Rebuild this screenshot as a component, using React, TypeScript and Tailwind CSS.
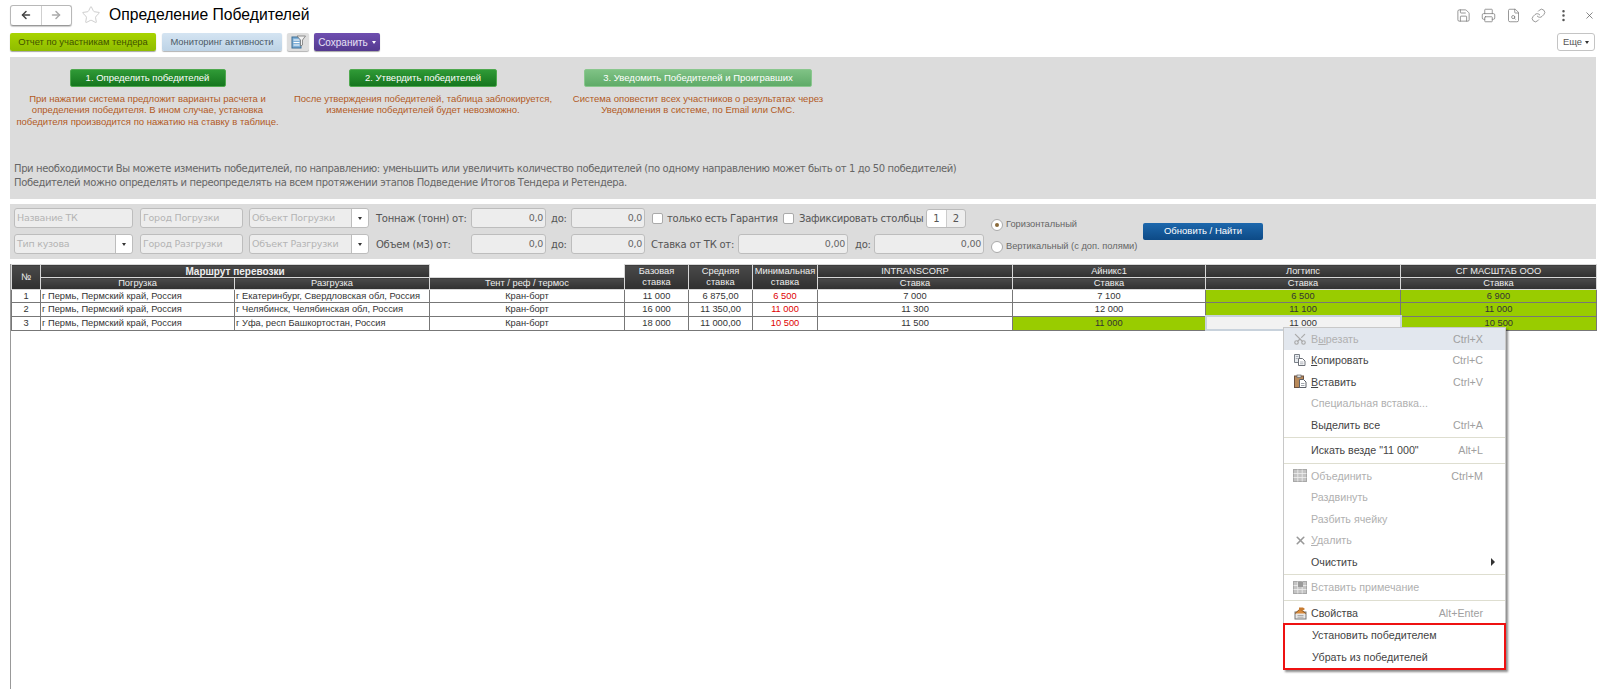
import React from 'react';
import { ArrowLeft, ArrowRight, Star, Save, Printer, FileSearch, Link, MoreVertical, X, Scissors } from 'lucide-react';

const rows = [
  { n: 1, from: 'г Пермь, Пермский край, Россия', to: 'г Екатеринбург, Свердловская обл, Россия', base: '11 000', avg: '6 875,00', min: '6 500', bids: ['7 000', '7 100', '6 500', '6 900'], win: [2, 3] },
  { n: 2, from: 'г Пермь, Пермский край, Россия', to: 'г Челябинск, Челябинская обл, Россия', base: '16 000', avg: '11 350,00', min: '11 000', bids: ['11 300', '12 000', '11 100', '11 000'], win: [2, 3] },
  { n: 3, from: 'г Пермь, Пермский край, Россия', to: 'г Уфа, респ Башкортостан, Россия', base: '18 000', avg: '11 000,00', min: '10 500', bids: ['11 500', '11 000', '11 000', '10 500'], win: [1, 3] },
];

const headBase = 'bg-gradient-to-b from-[#4a4a4a] to-[#303030] text-[#eeeeee] text-center border border-[#d8d8d8] p-0 leading-[11px]';
const head = `${headBase} font-normal`;
const cell = 'border border-[#777] p-0 text-center h-[12.6px] leading-[12px] whitespace-nowrap overflow-hidden';

function GrayInput({ text, w, arrow, right }: { text?: string; w: string; arrow?: boolean; right?: boolean }) {
  return (
    <div className={`${w} h-[20px] shrink-0 flex items-center rounded-[3px] border border-[#bdbdbd] bg-[#ededed] text-[#b4b4b4] text-[9.5px]`}>
      <span className={`flex-1 min-w-0 pl-[2px] pr-[2px] whitespace-nowrap overflow-hidden ${right ? 'text-right text-[#666]' : ''}`}>{text}</span>
      {arrow && (
        <span className="w-[17px] h-full border-l border-[#bdbdbd] bg-white rounded-r-[3px] flex items-center justify-center">
          <span className="w-0 h-0 border-x-[2.5px] border-x-transparent border-t-[3px] border-t-[#333]" />
        </span>
      )}
    </div>
  );
}

function MenuItem({ label, keys, icon, disabled, arrow, hover }: { label: React.ReactNode; keys?: string; icon?: React.ReactNode; disabled?: boolean; arrow?: boolean; hover?: boolean }) {
  return (
    <div className={`h-[21.5px] flex items-center pl-[7px] pr-[22px] text-[10.7px] ${hover ? 'bg-[#e2e7ee]' : ''} ${disabled ? 'text-[#b0b0b0]' : 'text-[#444]'}`}>
      <span className="w-[18px] h-[16px] mr-[2px] flex items-center justify-center shrink-0">{icon}</span>
      <span className="flex-1 whitespace-nowrap">{label}</span>
      {keys && <span className="text-[#a0a0a0] whitespace-nowrap">{keys}</span>}
      {arrow && <span className="w-0 h-0 -mr-[12px] border-y-[4px] border-y-transparent border-l-[4px] border-l-[#333]" />}
    </div>
  );
}

const Sep = () => <div className="h-px my-[1.5px] bg-[#deded0]" />;

const CopyIcon = () => (
  <svg width="14" height="14" viewBox="0 0 14 14" fill="none">
    <path d="M1.500 1.500h5v8h-5z" fill="#e8ecf0" stroke="#7a8088" />
    <path d="M5.500 5.500h4l2.500 2.500v4.500h-6.500z" fill="#fff" stroke="#6c7078" />
    <path d="M7 9h3.500M7 10.800h3.500M2.800 3.500h2.500M2.800 5.500h2" stroke="#9aa0a8" strokeWidth=".8" />
  </svg>
);

const PasteIcon = () => (
  <svg width="15" height="15" viewBox="0 0 15 15" fill="none">
    <rect x="1.500" y="2" width="9" height="11.500" fill="#b98a5a" stroke="#6a5040" />
    <rect x="4" y="1" width="4" height="2.500" fill="#ddd" stroke="#666" strokeWidth=".7" />
    <path d="M6.500 5.500h4l2.500 2.500v5.500h-6.500z" fill="#fff" stroke="#5c6068" />
    <path d="M8 9.500h3.500M8 11.500h3.500" stroke="#8a9098" strokeWidth=".8" />
  </svg>
);

const GridIcon = ({ note }: { note?: boolean }) => (
  <svg width="14" height="13" viewBox="0 0 14 13" fill="none">
    <rect x=".5" y=".5" width="13" height="12" fill="#c4c4c4" stroke="#a8a8a8" />
    <path d="M.5 4.500h13M.5 8.500h13M4.800 .5v12M9.200 .5v12" stroke="#f0f0f0" strokeWidth=".8" />
    {note && <rect x="5" y="1" width="5" height="5" fill="#9a9a9a" />}
  </svg>
);

const PropsIcon = () => (
  <svg width="15" height="14" viewBox="0 0 15 14" fill="none">
    <rect x="2" y="6" width="11" height="7" fill="#e8e8e8" stroke="#777" />
    <path d="M2 7.500 7 3l6 4.500" fill="#d98a3a" stroke="#8a5a28" />
    <path d="M4.500 9.500h6M4.500 11.200h6" stroke="#999" strokeWidth=".8" />
    <path d="M6 1.500h4l2 1.500-2 1.500H6z" fill="#c77b30" />
  </svg>
);

export default function App() {
  return (
    <div className="relative w-[1600px] h-[689px] overflow-hidden bg-white flex flex-col font-['Liberation_Sans',sans-serif] text-black">
      {/* title bar */}
      <div className="h-[20px] mt-[5px] pl-[10px] pr-[5px] flex items-center shrink-0">
        <div className="w-[62px] h-[21px] flex rounded-[3px] border border-[#b8b8b8] border-b-[#999] shadow-[0_1px_1px_rgba(0,0,0,.2)]">
          <span className="flex-1 flex items-center justify-center border-r border-[#cfcfcf]"><ArrowLeft size={12} strokeWidth={3} color="#444" /></span>
          <span className="flex-1 flex items-center justify-center"><ArrowRight size={12} strokeWidth={3} color="#aaa" /></span>
        </div>
        <Star size={20} strokeWidth={1} color="#c4c4c4" className="ml-[9px]" />
        <h1 className="ml-[8px] text-[15.7px] leading-none">Определение Победителей</h1>
        <div className="ml-auto flex items-center text-[#777] gap-[10px]">
          <Save size={15} strokeWidth={1.2} />
          <Printer size={15} strokeWidth={1.2} />
          <FileSearch size={15} strokeWidth={1.2} />
          <Link size={15} strokeWidth={1.2} />
          <MoreVertical size={15} strokeWidth={2} color="#555" />
          <X size={11} strokeWidth={1.5} color="#555" className="ml-[3px]" />
        </div>
      </div>

      {/* command bar */}
      <div className="h-[18px] mt-[8px] pl-[10px] pr-[5px] flex items-center shrink-0 text-[9.4px] whitespace-nowrap">
        <div className="w-[146px] h-full flex items-center justify-center rounded-[2px] bg-gradient-to-b from-[#a8d400] to-[#8fbc00] text-[#3f5200] shadow-[0_1px_1px_rgba(0,0,0,.35)]">Отчет по участникам тендера</div>
        <div className="ml-[6px] w-[120px] h-full flex items-center justify-center rounded-[2px] bg-gradient-to-b from-[#d4e4f2] to-[#bdd3e6] text-[#4c5a66] shadow-[0_1px_1px_rgba(0,0,0,.3)]">Мониторинг активности</div>
        <div className="ml-[5px] w-[22px] h-full flex items-center justify-center rounded-[2px] bg-[#dedede] shadow-[0_1px_1px_rgba(0,0,0,.3)]">
          <svg width="15" height="14" viewBox="0 0 15 14">
            <rect x="1" y="2" width="9" height="11" fill="#7fb0d8" stroke="#3c6e96" />
            <path d="M2.500 5h6M2.500 7.500h6M2.500 10h6" stroke="#fff" />
            <path d="M6 1h8.500l-3 4v5l-2 1V5z" fill="#f2f2f2" stroke="#777" strokeWidth=".8" />
          </svg>
        </div>
        <div className="ml-[5px] w-[66px] h-full flex items-center justify-center gap-[4px] rounded-[2px] bg-gradient-to-b from-[#6f4fb0] to-[#54398f] text-[#e8e2f5] text-[10px] shadow-[0_1px_1px_rgba(0,0,0,.35)]">
          Сохранить<span className="w-0 h-0 border-x-[2.5px] border-x-transparent border-t-[3px] border-t-white" />
        </div>
        <div className="ml-auto w-[38px] h-full flex items-center justify-center gap-[3px] rounded-[3px] border border-[#c4c4c4] text-[#555]">
          Еще<span className="w-0 h-0 border-x-[2.5px] border-x-transparent border-t-[3px] border-t-[#333]" />
        </div>
      </div>

      {/* instructions */}
      <div className="h-[142px] mt-[6px] ml-[10px] mr-[4px] shrink-0 bg-[#dcdcdc] pt-[12px] text-[9.5px] whitespace-nowrap">
        <div className="h-[93px] flex">
          <div className="w-[275px] flex flex-col items-center">
            <div className="w-[156px] h-[18px] flex items-center justify-center rounded-[2px] bg-gradient-to-b from-[#2f9a36] to-[#15761e] text-white border border-[#4fa84f]">1. Определить победителей</div>
            <p className="mt-[6px] text-center leading-[11.3px] text-[#b25a1e]">При нажатии система предложит варианты расчета и<br />определения победителя. В ином случае, установка<br />победителя производится по нажатию на ставку в таблице.</p>
          </div>
          <div className="ml-[3px] w-[270px] flex flex-col items-center">
            <div className="w-[148px] h-[18px] flex items-center justify-center rounded-[2px] bg-gradient-to-b from-[#2f9a36] to-[#15761e] text-white border border-[#4fa84f]">2. Утвердить победителей</div>
            <p className="mt-[6px] text-center leading-[11.3px] text-[#b25a1e]">После утверждения победителей, таблица заблокируется,<br />изменение победителей будет невозможно.</p>
          </div>
          <div className="ml-[8.5px] w-[263px] flex flex-col items-center">
            <div className="w-[228px] h-[18px] flex items-center justify-center rounded-[2px] bg-gradient-to-b from-[#7fc285] to-[#5fab68] text-white border border-[#8ac78e]">3. Уведомить Победителей и Проигравших</div>
            <p className="mt-[6px] text-center leading-[11.3px] text-[#b25a1e]">Система оповестит всех участников о результатах через<br />Уведомления в системе, по Email или СМС.</p>
          </div>
        </div>
        <p className="pl-[4px] text-[10px] leading-[13.5px] text-[#666] font-['DejaVu_Sans',sans-serif] tracking-[-0.38px]">При необходимости Вы можете изменить победителей, по направлению: уменьшить или увеличить количество победителей (по одному направлению может быть от 1 до 50 победителей)</p>
        <p className="pl-[4px] text-[10px] leading-[13.5px] text-[#666] font-['DejaVu_Sans',sans-serif] tracking-[-0.38px]">Победителей можно определять и переопределять на всем протяжении этапов Подведение Итогов Тендера и Ретендера.</p>
      </div>

      {/* filters */}
      <div className="h-[55px] mt-[5px] ml-[10px] mr-[4px] shrink-0 bg-[#dcdcdc] pt-[4px] pl-[4px] flex font-['DejaVu_Sans',sans-serif] text-[#555] text-[10px] tracking-[-0.25px] whitespace-nowrap">
        <div className="w-[970px] flex flex-col gap-[6px]">
          <div className="flex items-center h-[20px]">
            <GrayInput text="Название ТК" w="w-[119px]" />
            <div className="w-[7px]" />
            <GrayInput text="Город Погрузки" w="w-[103px]" />
            <div className="w-[6px]" />
            <GrayInput text="Объект Погрузки" w="w-[120px]" arrow />
            <span className="ml-[7px] w-[95px]">Тоннаж (тонн) от:</span>
            <GrayInput text="0,0" w="w-[75px]" right />
            <span className="ml-[5px] w-[20px]">до:</span>
            <GrayInput text="0,0" w="w-[74px]" right />
            <span className="ml-[7px] w-[11px] h-[11px] rounded-[2px] border border-[#aaa] bg-white shrink-0" />
            <span className="ml-[4px] w-[116px]">только есть Гарантия</span>
            <span className="w-[11px] h-[11px] rounded-[2px] border border-[#aaa] bg-white shrink-0" />
            <span className="ml-[5px] w-[127px]">Зафиксировать столбцы</span>
            <div className="w-[40px] h-[19px] flex rounded-[3px] border border-[#bbb] bg-[#eee]">
              <span className="flex-1 flex items-center justify-center bg-white rounded-l-[3px] border-r border-[#ccc]">1</span>
              <span className="flex-1 flex items-center justify-center">2</span>
            </div>
          </div>
          <div className="flex items-center h-[20px]">
            <GrayInput text="Тип кузова" w="w-[119px]" arrow />
            <div className="w-[7px]" />
            <GrayInput text="Город Разгрузки" w="w-[103px]" />
            <div className="w-[6px]" />
            <GrayInput text="Объект Разгрузки" w="w-[120px]" arrow />
            <span className="ml-[7px] w-[95px]">Объем (м3) от:</span>
            <GrayInput text="0,0" w="w-[75px]" right />
            <span className="ml-[5px] w-[20px]">до:</span>
            <GrayInput text="0,0" w="w-[74px]" right />
            <span className="ml-[6px] w-[87px]">Ставка от ТК от:</span>
            <GrayInput text="0,00" w="w-[110px]" right />
            <span className="ml-[7px] w-[19px]">до:</span>
            <GrayInput text="0,00" w="w-[110px]" right />
          </div>
        </div>
        <div className="ml-[7px] w-[152px] pt-[10px] flex flex-col gap-[9px] text-[9.3px] tracking-normal font-['Liberation_Sans',sans-serif] text-[#666]">
          <label className="flex items-center h-[13px]"><span className="w-[12px] h-[12px] mr-[3px] shrink-0 rounded-full border border-[#aaa] bg-white flex items-center justify-center"><span className="w-[4px] h-[4px] rounded-full bg-[#8a6a3a]" /></span>Горизонтальный</label>
          <label className="flex items-center h-[13px]"><span className="w-[12px] h-[12px] mr-[3px] shrink-0 rounded-full border border-[#aaa] bg-white" />Вертикальный (с доп. полями)</label>
        </div>
        <div className="mt-[15px] w-[120px] h-[17px] flex items-center justify-center rounded-[2px] bg-gradient-to-b from-[#1d68ad] to-[#0d4a86] text-white text-[9.5px] tracking-normal font-['Liberation_Sans',sans-serif]">Обновить / Найти</div>
      </div>

      {/* grid */}
      <div className="flex-1 mt-[5px] ml-[10px] mr-[3px] border-l border-[#999] text-[9.3px] text-[#333]">
        <table className="table-fixed border-collapse w-[1586px]">
          <colgroup>
            <col className="w-[29px]" />
            <col className="w-[194px]" />
            <col className="w-[195px]" />
            <col className="w-[195px]" />
            <col className="w-[64px]" />
            <col className="w-[64px]" />
            <col className="w-[65px]" />
            <col className="w-[195px]" />
            <col className="w-[193px]" />
            <col className="w-[195px]" />
            <col className="w-[196px]" />
          </colgroup>
          <thead>
            <tr className="h-[13px]">
              <th rowSpan={2} className={head}>№</th>
              <th colSpan={2} className={`${headBase} font-bold text-[10px]`}>Маршрут перевозки</th>
              <th className="bg-white border-0 p-0" />
              <th rowSpan={2} className={head}>Базовая<br />ставка</th>
              <th rowSpan={2} className={head}>Средняя<br />ставка</th>
              <th rowSpan={2} className={head}>Минимальная<br />ставка</th>
              <th className={head}>INTRANSCORP</th>
              <th className={head}>Айникс1</th>
              <th className={head}>Логтипс</th>
              <th className={head}>СГ МАСШТАБ ООО</th>
            </tr>
            <tr className="h-[11.5px]">
              <th className={head}>Погрузка</th>
              <th className={head}>Разгрузка</th>
              <th className={head}>Тент / реф / термос</th>
              <th className={head}>Ставка</th>
              <th className={head}>Ставка</th>
              <th className={head}>Ставка</th>
              <th className={head}>Ставка</th>
            </tr>
          </thead>
          <tbody>
            {rows.map((r) => (
              <tr key={r.n}>
                <td className={cell}>{r.n}</td>
                <td className={`${cell} text-left pl-[1px]`}>{r.from}</td>
                <td className={`${cell} text-left pl-[1px]`}>{r.to}</td>
                <td className={cell}>Кран-борт</td>
                <td className={cell}>{r.base}</td>
                <td className={cell}>{r.avg}</td>
                <td className={`${cell} text-[#e00000]`}>{r.min}</td>
                {r.bids.map((b, i) => {
                  const selected = r.n === 3 && i === 2;
                  return (
                    <td key={i} className={`${cell} ${r.win.includes(i) && !selected ? 'bg-[#99cc00] border-[#5d7a10]' : ''} ${selected ? 'bg-[#f2f2f2] border-2 border-[#c8d2dc]' : ''}`}>{b}</td>
                  );
                })}
              </tr>
            ))}
          </tbody>
        </table>
      </div>

      {/* context menu */}
      <div className="absolute left-[1283px] top-[327px] w-[223px] bg-white border border-[#c8c8c8] shadow-[2px_2px_2px_rgba(0,0,0,.45)]">
        <MenuItem hover disabled label={<>В<u>ы</u>резать</>} keys="Ctrl+X" icon={<Scissors size={14} color="#aaa" className="-rotate-90" />} />
        <MenuItem label={<><u>К</u>опировать</>} keys="Ctrl+C" icon={<CopyIcon />} />
        <MenuItem label={<><u>В</u>ставить</>} keys="Ctrl+V" icon={<PasteIcon />} />
        <MenuItem disabled label="Специальная вставка..." />
        <MenuItem label="Выделить все" keys="Ctrl+A" />
        <Sep />
        <MenuItem label={'Искать везде "11 000"'} keys="Alt+L" />
        <Sep />
        <MenuItem disabled label="Объединить" keys="Ctrl+M" icon={<GridIcon />} />
        <MenuItem disabled label="Раздвинуть" />
        <MenuItem disabled label="Разбить ячейку" />
        <MenuItem disabled label={<><u>У</u>далить</>} icon={<X size={13} strokeWidth={3} color="#999" />} />
        <MenuItem label="Очистить" arrow />
        <Sep />
        <MenuItem disabled label="Вставить примечание" icon={<GridIcon note />} />
        <Sep />
        <MenuItem label="Свойства" keys="Alt+Enter" icon={<PropsIcon />} />
        <div className="border-2 border-[#ee1111] -mx-[1px] -mb-[1px] -mt-[1px]">
          <MenuItem label="Установить победителем" />
          <MenuItem label="Убрать из победителей" />
        </div>
      </div>
    </div>
  );
}
